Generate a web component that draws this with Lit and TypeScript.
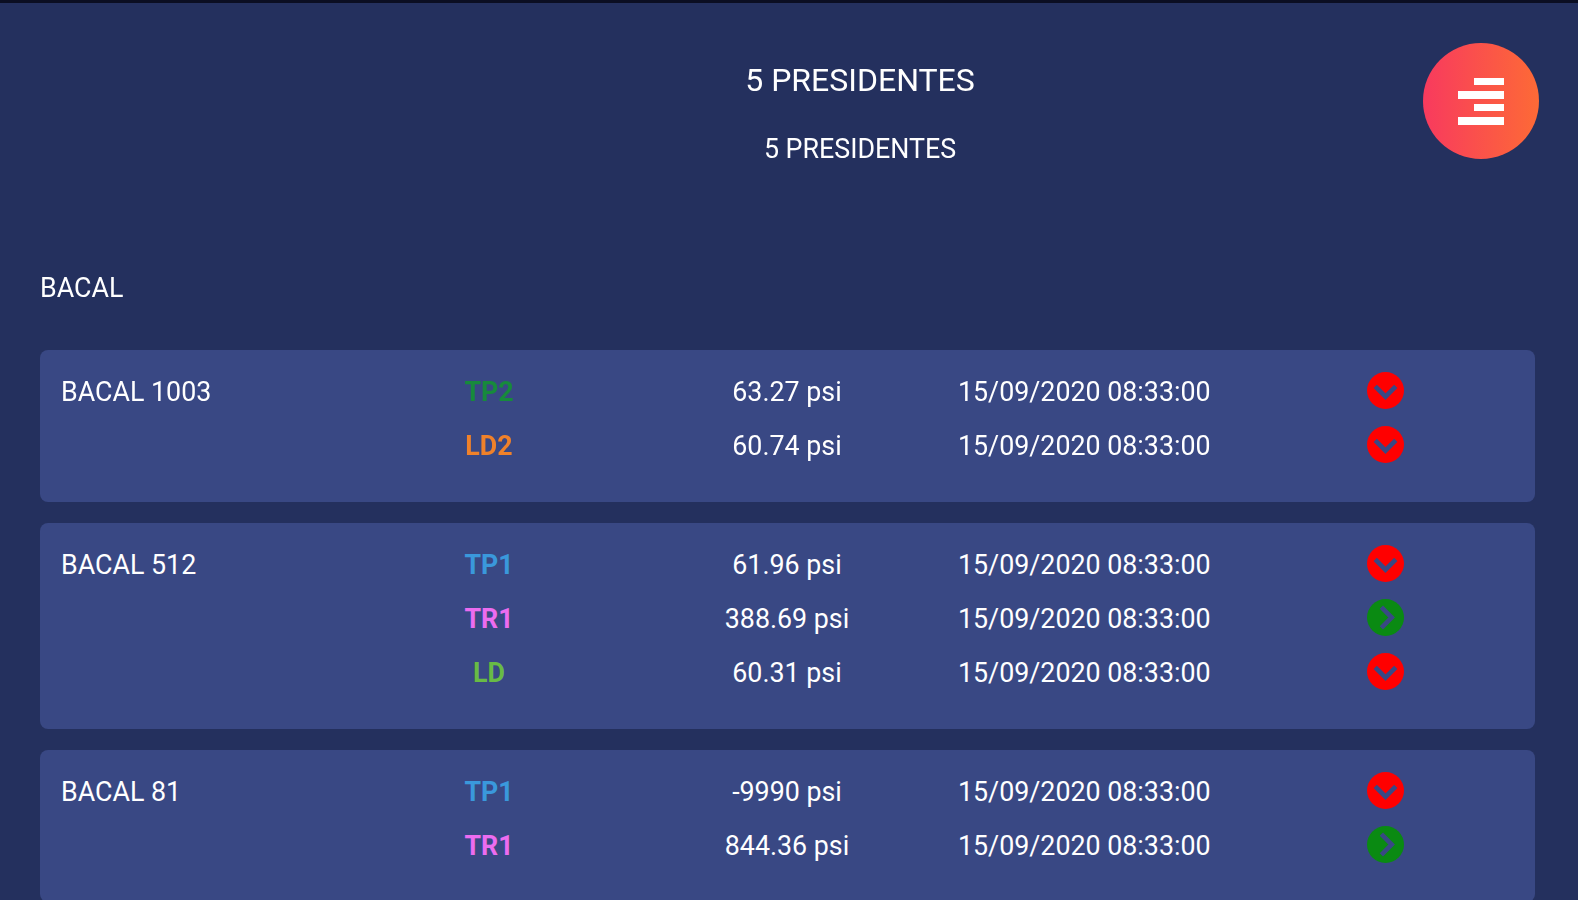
import {LitElement, css, html, svg} from 'lit';
import {customElement} from 'lit/decorators.js';

type Reading = {tag: string, color: string, value: string, date: string, ok: boolean};
type Well = {name: string, readings: Reading[]};

const DATE = '15/09/2020 08:33:00';
const GREEN = '#178a3c';
const ORANGE = '#f0812a';
const BLUE = '#3a98dc';
const PINK = '#ec6cf0';
const LIME = '#68bb45';

const WELLS: Well[] = [
  {name: 'BACAL 1003', readings: [
    {tag: 'TP2', color: GREEN, value: '63.27 psi', date: DATE, ok: false},
    {tag: 'LD2', color: ORANGE, value: '60.74 psi', date: DATE, ok: false},
  ]},
  {name: 'BACAL 512', readings: [
    {tag: 'TP1', color: BLUE, value: '61.96 psi', date: DATE, ok: false},
    {tag: 'TR1', color: PINK, value: '388.69 psi', date: DATE, ok: true},
    {tag: 'LD', color: LIME, value: '60.31 psi', date: DATE, ok: false},
  ]},
  {name: 'BACAL 81', readings: [
    {tag: 'TP1', color: BLUE, value: '-9990 psi', date: DATE, ok: false},
    {tag: 'TR1', color: PINK, value: '844.36 psi', date: DATE, ok: true},
  ]},
];

@customElement('app-root')
export class AppRoot extends LitElement {
  static styles = css`
    :host {
      display: block;
      height: 100vh;
      overflow: hidden;
      box-sizing: border-box;
      border-top: 3px solid #0b0e22;
      background: #24305e;
      color: #fff;
      font-family: Roboto, "Liberation Sans", sans-serif;
      font-size: 26.8px;
      position: relative;
    }
    .page {
      filter: blur(0.6px);
    }
    .head {
      padding: 59px 0 0 142px;
      text-align: center;
    }
    .title {
      font-size: 32px;
      line-height: 36px;
    }
    .sub {
      line-height: 32px;
      margin-top: 35px;
    }
    .section {
      margin: 107px 0 46px 40px;
      line-height: 32px;
    }
    .list {
      display: flex;
      flex-direction: column;
      gap: 21px;
      margin: 0 43px 0 40px;
    }
    .card {
      display: flex;
      background: #394884;
      border-radius: 8px;
      padding: 15px 0 29px 21px;
    }
    .name {
      width: 299px;
      line-height: 54px;
    }
    .row {
      display: grid;
      grid-template-columns: 256px 342px 410px 36px;
      align-items: center;
      height: 54px;
    }
    .tag {
      text-align: center;
      font-weight: 700;
      padding-left: 2px;
    }
    .value {
      text-align: center;
    }
    .ico {
      width: 37px;
      height: 37px;
      display: block;
      margin: -3px 0 0 -1px;
    }
    .fab {
      position: absolute;
      top: 40px;
      left: 1423px;
      width: 116px;
      height: 116px;
      border-radius: 50%;
      background: linear-gradient(90deg, #f83a5e, #fd6a36);
      display: flex;
      align-items: center;
      justify-content: center;
      filter: blur(0.7px);
    }
  `;

  renderIcon(ok: boolean) {
    const d = ok ? 'M14 8 L24 18 L14 28' : 'M8 14 L18 24 L28 14';
    return html`<svg class="ico" viewBox="0 0 36 36">
      ${svg`<circle cx="18" cy="18" r="18" fill=${ok ? '#0a8a12' : '#ff0000'}></circle>
      <path d=${d} fill="none" stroke="#394884" stroke-width="4.5"></path>`}
    </svg>`;
  }

  render() {
    return html`
      <div class="page">
        <div class="head">
          <div class="title">5 PRESIDENTES</div>
          <div class="sub">5 PRESIDENTES</div>
        </div>
        <div class="section">BACAL</div>
        <div class="list">
          ${WELLS.map(w => html`
            <div class="card">
              <div class="name">${w.name}</div>
              <div>
                ${w.readings.map(r => html`
                  <div class="row">
                    <div class="tag" style="color: ${r.color}">${r.tag}</div>
                    <div class="value">${r.value}</div>
                    <div>${r.date}</div>
                    ${this.renderIcon(r.ok)}
                  </div>
                `)}
              </div>
            </div>
          `)}
        </div>
      </div>
      <div class="fab">
        <svg width="48" height="48" viewBox="0 0 48 48" fill="#fff">
          <rect x="17" y="1" width="30" height="7"></rect>
          <rect x="1" y="14" width="46" height="8"></rect>
          <rect x="17" y="27" width="30" height="7"></rect>
          <rect x="1" y="40" width="46" height="8"></rect>
        </svg>
      </div>
    `;
  }
}
